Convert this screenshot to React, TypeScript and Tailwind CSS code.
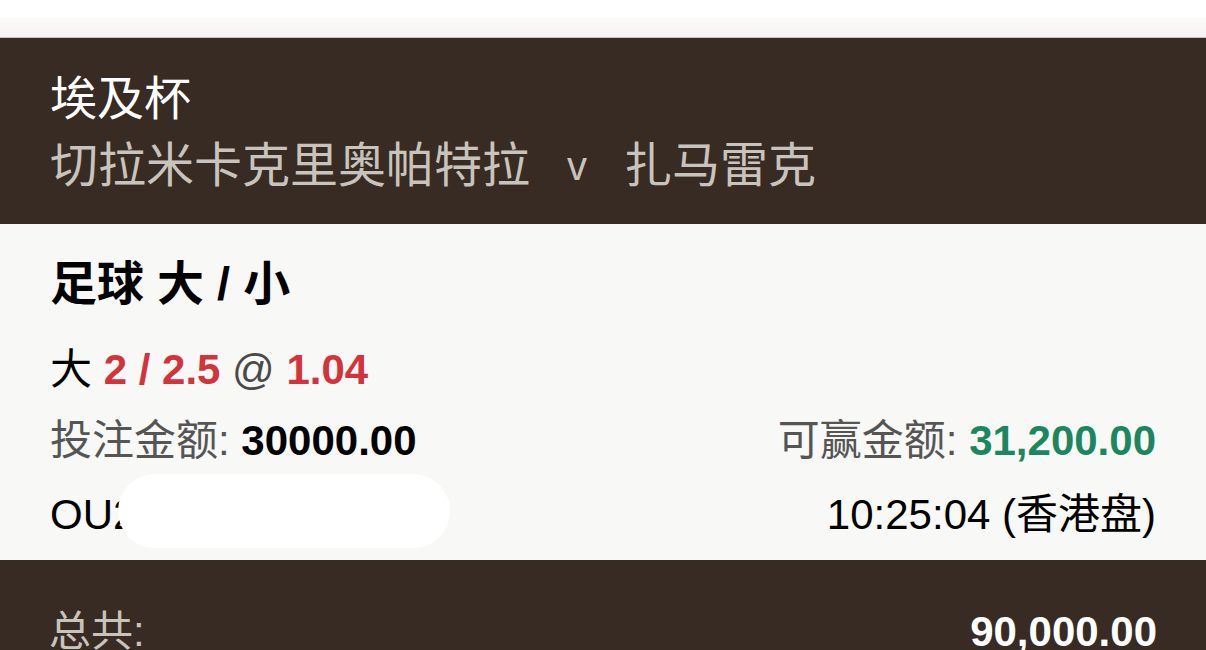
import React from "react";

const font = {
  fontFamily: '"Liberation Sans", "Noto Sans CJK SC", sans-serif',
};

function BetHeader() {
  return (
    <div className="bg-[#372b23] px-[50px] pt-[29px] pb-[26px]">
      <div className="text-[47px] leading-[64px] text-white">埃及杯</div>
      <div className="mt-[3px] flex items-center text-[48px] leading-[64px] text-[#c9c3bd]">
        <span>切拉米卡克里奥帕特拉</span>
        <span className="mx-[37px] text-[40px]">v</span>
        <span>扎马雷克</span>
      </div>
    </div>
  );
}

function BetDetail() {
  return (
    <div className="relative bg-[#f8f8f6] px-[50px] pt-[32px] pb-[17px]">
      <div className="text-[47px] font-bold leading-[56px] text-black">足球 大 / 小</div>
      <div className="mt-[30px] text-[42px] leading-[56px] text-black">
        大 <span className="font-bold text-[#d2343b]">2 / 2.5</span>{" "}
        <span className="text-[#4a4a4a]">@</span>{" "}
        <span className="font-bold text-[#d2343b]">1.04</span>
      </div>
      <div className="mt-[15px] flex items-center justify-between text-[42px] leading-[56px]">
        <div>
          <span className="text-[#555]">投注金额: </span>
          <span className="font-bold text-black">30000.00</span>
        </div>
        <div>
          <span className="text-[#555]">可赢金额: </span>
          <span className="font-bold text-[#1c8660]">31,200.00</span>
        </div>
      </div>
      <div className="mt-[18px] flex items-center justify-between text-[42px] leading-[56px] text-black">
        <span>OU2</span>
        <span>10:25:04 (香港盘)</span>
      </div>
      <div className="absolute left-[118px] top-[250px] h-[74px] w-[332px] rounded-[40px] bg-white" />
    </div>
  );
}

export default function App() {
  return (
    <div className="h-[650px] w-[1206px] overflow-hidden bg-white" style={font}>
      <div className="h-[18px] bg-white" />
      <div className="h-[20px] border-b border-[#c9c4bf] bg-gradient-to-b from-[#fbfbfa] to-[#f6f4f1]" />
      <BetHeader />
      <BetDetail />
      <div className="flex items-center justify-between bg-[#372b23] px-[49px] pt-[44px] pb-[20px] text-[42px] leading-[56px]">
        <span className="text-[#c9c3bd]">总共:</span>
        <span className="font-bold text-white">90,000.00</span>
      </div>
    </div>
  );
}
